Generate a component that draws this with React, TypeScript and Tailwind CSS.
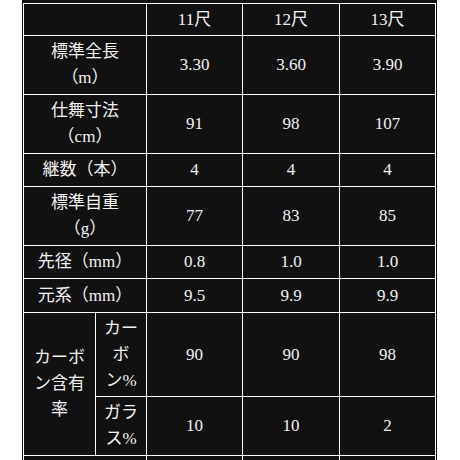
const cell = "border border-white text-center align-middle px-[4px] py-0"

const rows: { label: string; h: string; vals: string[] }[] = [
    { label: "標準全長（m）", h: "h-[59px]", vals: ["3.30", "3.60", "3.90"] },
    { label: "仕舞寸法（cm）", h: "h-[59px]", vals: ["91", "98", "107"] },
    { label: "継数（本）", h: "h-[33px]", vals: ["4", "4", "4"] },
    { label: "標準自重（g）", h: "h-[59px]", vals: ["77", "83", "85"] },
    { label: "先径（mm）", h: "h-[33px]", vals: ["0.8", "1.0", "1.0"] },
    { label: "元系（mm）", h: "h-[34px]", vals: ["9.5", "9.9", "9.9"] },
]

export default function App() {
    return (
        <div className="w-[460px] h-[460px] overflow-hidden bg-white">
            <div
                className="ml-[22px] w-[415px] bg-[#111111] pt-[3px] pl-[1px] text-[17px] leading-[26px] text-[#f2f2f2] [text-spacing-trim:space-all]"
                style={{ fontFamily: '"Liberation Serif", "Noto Sans CJK JP", serif' }}
            >
                <table className="table-fixed border-collapse w-[413px]">
                    <colgroup>
                        <col className="w-[72px]" />
                        <col className="w-[51px]" />
                        <col className="w-[96px]" />
                        <col className="w-[97px]" />
                        <col className="w-[96px]" />
                    </colgroup>
                    <tbody>
                        <tr className="h-[32px]">
                            <td className={cell} colSpan={2}></td>
                            <td className={cell}>11尺</td>
                            <td className={cell}>12尺</td>
                            <td className={cell}>13尺</td>
                        </tr>

                        {rows.map((r) => (
                            <tr key={r.label} className={r.h}>
                                <td className={cell + " px-[12px]"} colSpan={2}>{r.label}</td>
                                {r.vals.map((v, i) => (
                                    <td key={i} className={cell}>{v}</td>
                                ))}
                            </tr>
                        ))}

                        <tr className="h-[84px]">
                            <td className={cell + " px-[10px]"} rowSpan={2}>カーボン含有率</td>
                            <td className={cell + " px-[7px]"}>カーボン%</td>
                            <td className={cell}>90</td>
                            <td className={cell}>90</td>
                            <td className={cell}>98</td>
                        </tr>
                        <tr className="h-[59px]">
                            <td className={cell + " px-[7px]"}>ガラス%</td>
                            <td className={cell}>10</td>
                            <td className={cell}>10</td>
                            <td className={cell}>2</td>
                        </tr>
                        <tr className="h-[40px]">
                            <td className={cell} colSpan={2}>&nbsp;</td>
                            <td className={cell}>&nbsp;</td>
                            <td className={cell}>&nbsp;</td>
                            <td className={cell}>&nbsp;</td>
                        </tr>
                    </tbody>
                </table>
            </div>
        </div>
    )
}
